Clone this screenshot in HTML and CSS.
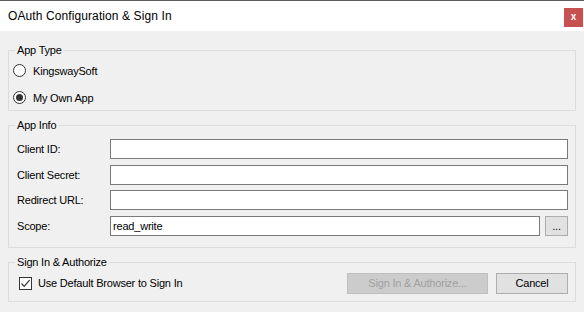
FILE: index.html
```html
<!DOCTYPE html>
<html lang="en">
<head>
<meta charset="utf-8">
<title>OAuth Configuration &amp; Sign In</title>
<link rel="stylesheet" href="styles.css">
</head>
<body>
<div class="window">
  <header class="titlebar">
    <span class="title">OAuth Configuration &amp; Sign In</span>
    <span class="close">x</span>
  </header>
  <main class="content">
    <fieldset class="group group-type">
      <legend>App Type</legend>
      <div class="radio-list">
        <label class="radio"><span class="radio-circle"></span><span class="radio-text">KingswaySoft</span></label>
        <label class="radio"><span class="radio-circle checked"></span><span class="radio-text">My Own App</span></label>
      </div>
    </fieldset>
    <fieldset class="group group-info">
      <legend>App Info</legend>
      <div class="form-grid">
        <span class="field-label">Client ID:</span>
        <div class="input"></div>
        <span class="field-label">Client Secret:</span>
        <div class="input"></div>
        <span class="field-label">Redirect URL:</span>
        <div class="input"></div>
        <span class="field-label">Scope:</span>
        <div class="scope-row">
          <div class="input">read_write</div>
          <span class="btn browse">...</span>
        </div>
      </div>
    </fieldset>
    <fieldset class="group group-sign">
      <legend>Sign In &amp; Authorize</legend>
      <div class="sign-row">
        <label class="check">
          <span class="checkbox"><svg width="11" height="11" viewBox="0 0 11 11"><path d="M1.5 5.5 L4.2 8.3 L9.6 2.2" fill="none" stroke="#333" stroke-width="1.2"/></svg></span>
          <span>Use Default Browser to Sign In</span>
        </label>
        <div class="buttons">
          <span class="btn btn-disabled">Sign In &amp; Authorize...</span>
          <span class="btn btn-cancel">Cancel</span>
        </div>
      </div>
    </fieldset>
  </main>
</div>
</body>
</html>
```
FILE: styles.css
```css
html, body {
  margin: 0;
  padding: 0;
}
body {
  background: #f0f0f0;
  font-family: "Liberation Sans", Arial, sans-serif;
  font-size: 11px;
  letter-spacing: -0.2px;
  color: #000;
  width: 584px;
  height: 312px;
  overflow: hidden;
}
.titlebar {
  height: 30px;
  border-top: 1px solid #5e5e5e;
  background: #fff;
  display: flex;
  align-items: flex-start;
  justify-content: space-between;
  padding: 0 1px 0 8px;
}
.title {
  font-size: 12px;
  letter-spacing: 0.1px;
  line-height: 14px;
  margin-top: 8px;
}
.close {
  width: 19px;
  height: 19px;
  margin-top: 7px;
  background: #c75050;
  color: #fff;
  font-weight: bold;
  font-size: 10px;
  letter-spacing: 0;
  line-height: 18px;
  text-align: center;
}
.content {
  padding: 0 8px;
}
.group {
  margin: 0;
  border: 1px solid #dcdcdc;
  padding: 0 7px 0 6px;
  min-width: 0;
}
.group legend {
  padding: 0 2px;
  line-height: 13px;
  font-size: 11px;
}
.group-type {
  margin-top: 13px;
  padding-top: 7px;
  padding-bottom: 6px;
}
.radio-list {
  display: flex;
  flex-direction: column;
  gap: 14px;
  margin-left: -2px;
}
.radio {
  display: flex;
  align-items: center;
  height: 13px;
  gap: 7px;
}
.radio-text {
  line-height: 13px;
  padding-top: 1px;
}
.radio-circle {
  width: 13px;
  height: 13px;
  box-sizing: border-box;
  border: 1px solid #333;
  border-radius: 50%;
  background: #fff;
  display: flex;
  align-items: center;
  justify-content: center;
}
.radio-circle.checked::after {
  content: "";
  width: 7px;
  height: 7px;
  border-radius: 50%;
  background: #333;
}
.group-info {
  margin-top: 8px;
  padding-top: 7px;
  padding-bottom: 11px;
}
.form-grid {
  display: grid;
  grid-template-columns: 95px 1fr;
  grid-auto-rows: 20px;
  row-gap: 5.67px;
  align-items: center;
}
.field-label {
  padding-left: 2px;
  line-height: 20px;
}
.input {
  height: 20px;
  box-sizing: border-box;
  border: 1px solid #7a7a7a;
  background: #fff;
  padding-left: 2px;
  line-height: 18px;
}
.scope-row {
  display: flex;
  gap: 5px;
}
.scope-row .input {
  flex: 1;
}
.btn {
  box-sizing: border-box;
  border: 1px solid #adadad;
  background: #e1e1e1;
  display: flex;
  align-items: center;
  justify-content: center;
  white-space: nowrap;
}
.browse {
  width: 23px;
  height: 20px;
  line-height: 18px;
}
.group-sign {
  margin-top: 8px;
  padding-top: 4px;
  padding-bottom: 7px;
}
.sign-row {
  display: flex;
  align-items: center;
  justify-content: space-between;
}
.check {
  display: flex;
  align-items: center;
  gap: 6px;
  margin-left: 4px;
}
.checkbox {
  width: 13px;
  height: 13px;
  box-sizing: border-box;
  border: 1px solid #333;
  background: #fff;
  display: flex;
  align-items: center;
  justify-content: center;
}
.checkbox svg {
  display: block;
}
.buttons {
  display: flex;
  gap: 8px;
}
.btn-disabled {
  width: 141px;
  height: 21px;
  background: #cccccc;
  border-color: #bfbfbf;
  color: #a0a0a0;
}
.btn-cancel {
  width: 72px;
  height: 21px;
}
```
